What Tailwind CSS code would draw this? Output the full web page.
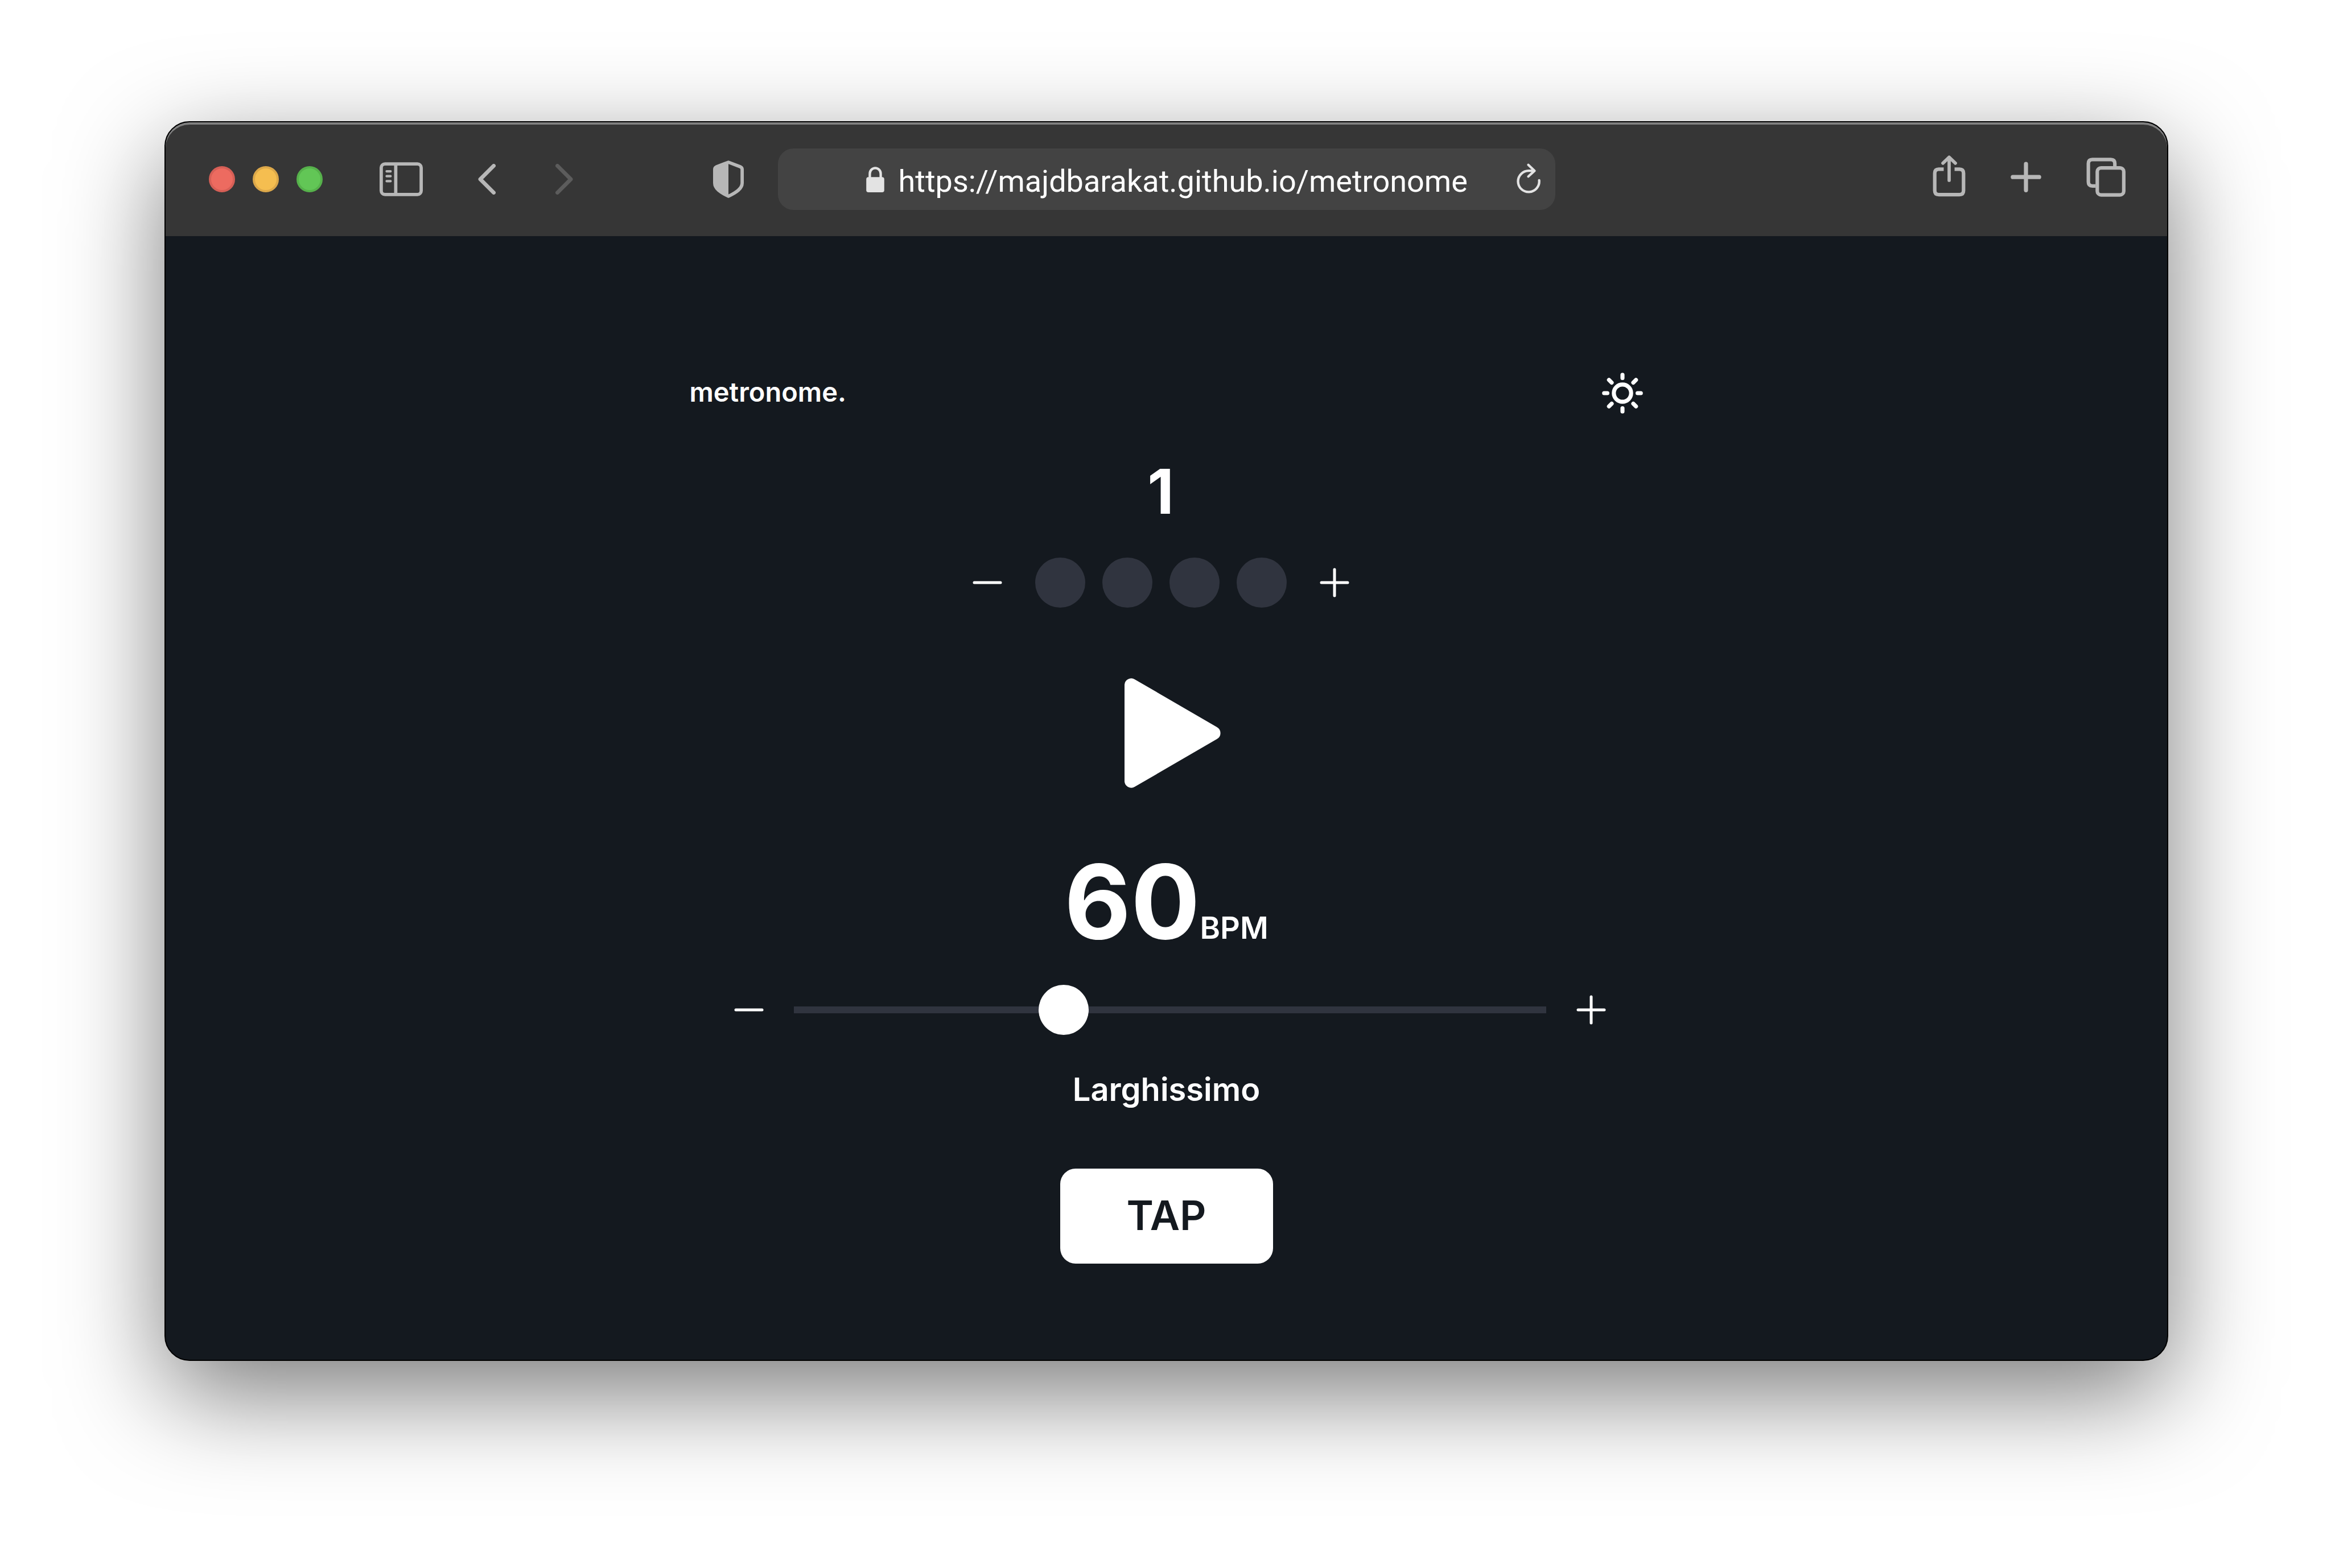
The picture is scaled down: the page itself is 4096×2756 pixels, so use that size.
<!DOCTYPE html>
<html lang="en">
<head>
<meta charset="utf-8">
<meta name="viewport" content="width=device-width, initial-scale=1">
<title>metronome.</title>
<script src="https://cdn.jsdelivr.net/npm/@tailwindcss/browser@4"></script>
</head>
<body class="min-h-screen bg-white pt-[213px] pr-[286px] pb-[364px] pl-[289px] font-['Inter',sans-serif]">
<div class="overflow-hidden rounded-[44px] border-2 border-black bg-[#14191f] shadow-[0_58px_180px_rgba(0,0,0,0.52)]">

  <!-- Browser toolbar -->
  <header class="grid h-[200px] grid-cols-[1fr_1366px_1fr] items-center rounded-t-[42px] bg-[#363636] text-[#b7b7b7] shadow-[inset_0_4px_0_#808080]">
    <div class="flex items-center pr-[60px] pl-[76px]">
      <div class="flex gap-[31px]">
        <button aria-label="Close" class="size-[46px] rounded-full border-4 border-[#d65f56] bg-[#ed6b60]"></button>
        <button aria-label="Minimize" class="size-[46px] rounded-full border-4 border-[#dca84a] bg-[#f5be50]"></button>
        <button aria-label="Zoom" class="size-[46px] rounded-full border-4 border-[#56b14b] bg-[#62c656]"></button>
      </div>
      <button aria-label="Show sidebar" class="ml-[100px]">
        <svg class="h-[60px] w-[76px]" viewBox="0 0 79 62" fill="none" stroke="currentColor" stroke-width="6"><rect x="3" y="3" width="73" height="56" rx="7"/><path d="M29.500 3v56"/><path d="M13 16.500h7M13 25.500h7M13 34.500h7" stroke-width="4.500" stroke-linecap="round"/></svg>
      </button>
      <button aria-label="Back" class="ml-[97px]">
        <svg class="h-[54px] w-[31px]" viewBox="0 0 32 56" fill="none" stroke="currentColor" stroke-width="7" stroke-linecap="round" stroke-linejoin="round"><path d="M28.500 3.500L4 28l24.500 24.500"/></svg>
      </button>
      <button aria-label="Forward" class="ml-[105px] text-[#5c5c5c]">
        <svg class="h-[54px] w-[31px]" viewBox="0 0 32 56" fill="none" stroke="currentColor" stroke-width="7" stroke-linecap="round" stroke-linejoin="round"><path d="M3.500 3.500L28 28L3.500 52.500"/></svg>
      </button>
      <button aria-label="Privacy report" class="ml-auto">
        <svg class="h-[66px] w-[54px]" viewBox="0 0 56 68" fill="none" stroke="currentColor" stroke-width="6" stroke-linejoin="round"><path d="M28 3L6 11.500Q3 13 3 16v25c0 10 10 17 25 24c15-7 25-14 25-24V16q0-3-3-4.500Z"/><path d="M28 3L6 11.500Q3 13 3 16v25c0 10 10 17 25 24Z" fill="currentColor" stroke="none"/></svg>
      </button>
    </div>

    <div class="flex h-[108px] items-center rounded-[27px] bg-[#434343] pr-[26px] pl-[155px] text-[#e3e3e3]">
      <svg class="h-[45px] w-[32px] shrink-0" viewBox="0 0 33 47"><path d="M6.500 22V13a10 10.500 0 0 1 20 0v9" fill="none" stroke="currentColor" stroke-width="4.500"/><rect y="19" width="33" height="28" rx="4" fill="currentColor"/></svg>
      <input aria-label="Address" type="text" value="https://majdbarakat.github.io/metronome" class="ml-[25px] h-[78px] min-w-0 flex-1 bg-transparent pt-[6px] font-['Roboto',sans-serif] text-[54px] leading-[72px] text-white outline-none">
      <button aria-label="Reload">
        <svg class="h-[58px] w-[42px]" viewBox="0 0 44 60" fill="none" stroke="currentColor" stroke-width="4.500" stroke-linecap="round" stroke-linejoin="round"><path d="M32 14.500H22.500A19.500 19.500 0 1 0 41.500 32"/><path d="M21.500 3.500L33 14.500L21.500 25"/></svg>
      </button>
    </div>

    <div class="flex items-center justify-end gap-[79px] pr-[73px]">
      <button aria-label="Share">
        <svg class="h-[84px] w-[58px]" viewBox="0 0 60 88" fill="none" stroke="currentColor" stroke-width="6.500"><path d="M20 25.500H11q-7.500 0-7.500 7.500v32q0 7.500 7.500 7.500h38q7.500 0 7.500-7.500V33q0-7.500-7.500-7.500h-9"/><path d="M30 46V4M18.500 14.500L30 3.500l11.500 11" stroke-width="6" stroke-linecap="round" stroke-linejoin="round"/></svg>
      </button>
      <button aria-label="New tab">
        <svg class="h-[62px] w-[54px]" viewBox="0 0 56 64" fill="none" stroke="currentColor" stroke-width="7.500" stroke-linecap="round"><path d="M28 4v48M4 28h48"/></svg>
      </button>
      <button aria-label="Show all tabs">
        <svg class="h-[76px] w-[69px]" viewBox="0 0 72 80" fill="none" stroke="currentColor" stroke-width="6.500"><rect x="20" y="19" width="49" height="50" rx="7"/><path d="M17 52.500H11q-7.500 0-7.500-7.500V11q0-7.500 7.500-7.500h34q7.500 0 7.500 7.500v6"/></svg>
      </button>
    </div>
  </header>

  <!-- Metronome app -->
  <main class="mx-auto flex max-w-[1676px] flex-col items-center pt-[239px] pb-[169px] text-white">
    <div class="flex w-full items-center justify-between">
      <a href="#" class="pb-1 text-[47px] leading-[60px] font-semibold">metronome.</a>
      <button aria-label="Light theme">
        <svg class="size-[74px]" viewBox="0 0 78 78" fill="none" stroke="currentColor" stroke-width="7.500" stroke-linecap="round"><circle cx="39" cy="39" r="16"/><path d="M39 5v6M39 67v6M5 39h6M67 39h6M14 14.500l5 5M59 58.500l5 5M64 14.500l-5 5M19 58.500l-5 5"/></svg>
      </button>
    </div>

    <output class="mt-[82px] pr-5 text-[108px] leading-[108px] font-bold">1</output>

    <div class="mt-[62px] flex items-center pr-5">
      <button aria-label="Remove beat" class="mr-[58px]">
        <svg class="size-[52px]" viewBox="0 0 52 52" stroke="currentColor" stroke-width="5" stroke-linecap="round"><path d="M3 26h46"/></svg>
      </button>
      <div class="flex gap-[30px]">
        <span class="size-[88px] rounded-full bg-[#30343f]"></span>
        <span class="size-[88px] rounded-full bg-[#30343f]"></span>
        <span class="size-[88px] rounded-full bg-[#30343f]"></span>
        <span class="size-[88px] rounded-full bg-[#30343f]"></span>
      </div>
      <button aria-label="Add beat" class="ml-[58px]">
        <svg class="size-[52px]" viewBox="0 0 52 52" stroke="currentColor" stroke-width="5" stroke-linecap="round"><path d="M3 26h46M26 3v46"/></svg>
      </button>
    </div>

    <button aria-label="Play" class="mt-[124px] pl-[22px]">
      <svg class="h-[193px] w-[169px]" viewBox="0 0 177 201" fill="currentColor"><path d="M0 13A12.500 12.500 0 0 1 19 1.700L170 89.500A12.500 12.500 0 0 1 170 111.500L19 199.300A12.500 12.500 0 0 1 0 188Z"/></svg>
    </button>

    <div class="mt-[110px] flex items-baseline leading-[180px]">
      <span class="text-[180px] font-bold">60</span><span class="text-[54px] leading-[54px] font-semibold">BPM</span>
    </div>

    <div class="mt-[56px] flex items-center gap-[53px] pl-[13px]">
      <button aria-label="Slower">
        <svg class="size-[52px]" viewBox="0 0 52 52" stroke="currentColor" stroke-width="5" stroke-linecap="round"><path d="M3 26h46"/></svg>
      </button>
      <input aria-label="Tempo" type="range" min="0" max="172" value="60" class="h-[88px] w-[1322px] appearance-none bg-transparent [&::-webkit-slider-runnable-track]:h-3 [&::-webkit-slider-runnable-track]:bg-[#30343f] [&::-webkit-slider-thumb]:-mt-[38px] [&::-webkit-slider-thumb]:size-[88px] [&::-webkit-slider-thumb]:appearance-none [&::-webkit-slider-thumb]:rounded-full [&::-webkit-slider-thumb]:bg-white">
      <button aria-label="Faster">
        <svg class="size-[52px]" viewBox="0 0 52 52" stroke="currentColor" stroke-width="5" stroke-linecap="round"><path d="M3 26h46M26 3v46"/></svg>
      </button>
    </div>

    <p class="mt-[69px] text-[56px] leading-[54px] font-semibold">Larghissimo</p>

    <button class="mt-[112px] h-[167px] w-[374px] rounded-[27px] bg-white pb-1 text-[72px] leading-[72px] font-semibold text-[#14191f]">TAP</button>
  </main>
</div>
</body>
</html>
